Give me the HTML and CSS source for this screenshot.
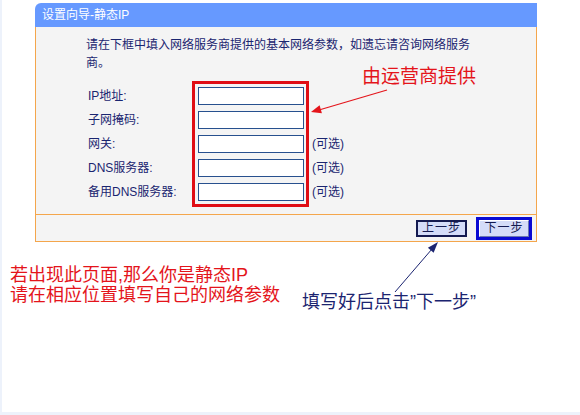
FILE: index.html
```html
<!DOCTYPE html>
<html lang="zh-CN">
<head>
<meta charset="utf-8">
<title>设置向导-静态IP</title>
<link rel="stylesheet" href="styles.css">
</head>
<body>
<div class="page">
  <div class="wizard">
    <div class="wizard-title">设置向导-静态IP</div>
    <div class="wizard-body">
      <p class="intro"><span class="intro-line">请在下框中填入网络服务商提供的基本网络参数，如遗忘请咨询网络服务</span><span class="intro-line">商。</span></p>
      <div class="form">
        <div class="labels">
          <span>IP地址:</span>
          <span>子网掩码:</span>
          <span>网关:</span>
          <span>DNS服务器:</span>
          <span>备用DNS服务器:</span>
        </div>
        <div class="field-box">
          <input class="field" type="text">
          <input class="field" type="text">
          <input class="field" type="text">
          <input class="field" type="text">
          <input class="field" type="text">
        </div>
        <div class="opts">
          <span></span>
          <span></span>
          <span>(可选)</span>
          <span>(可选)</span>
          <span>(可选)</span>
        </div>
      </div>
    </div>
    <div class="wizard-foot">
      <button class="btn" type="button">上一步</button>
      <span class="btn-focus"><button class="btn btn-next" type="button">下一步</button></span>
    </div>
  </div>
  <div class="notes">
    <div class="note-red">若出现此页面,那么你是静态IP<br>请在相应位置填写自己的网络参数</div>
    <div class="note-blue">填写好后点击”下一步”</div>
  </div>
  <div class="callout">由运营商提供</div>
  <svg class="arrows" width="580" height="415" viewBox="0 0 580 415">
    <line x1="387" y1="90" x2="319" y2="110" stroke="#e4141b" stroke-width="1.2"/>
    <polygon points="311,112 321.9,113.2 319.6,105.2" fill="#e4141b"/>
    <line x1="395" y1="292" x2="432" y2="249" stroke="#1b2470" stroke-width="1"/>
    <polygon points="438,242 433.6,252.8 427.9,247.8" fill="#1b2470"/>
  </svg>
</div>
</body>
</html>
```
FILE: styles.css
```css
html, body {
  margin: 0;
  padding: 0;
}
body {
  background: #edf2fb;
  width: 580px;
  height: 415px;
  overflow: hidden;
  font-family: "Liberation Sans", "Noto Sans CJK SC", sans-serif;
}
.page {
  position: relative;
  margin-left: 2px;
  width: 578px;
  height: 412px;
  background: #ffffff;
  overflow: hidden;
}
.wizard {
  margin: 3px 0 0 33px;
  width: 502px;
}
.wizard-title {
  height: 24px;
  line-height: 24px;
  padding-left: 7px;
  background: #6699ff;
  color: #ffffff;
  font-size: 12px;
  border-radius: 6px 0 0 0;
}
.wizard-body {
  background: #f4f4f4;
  border-left: 1px solid #f4a64c;
  border-right: 1px solid #f4a64c;
  padding: 9px 0 7px 50px;
}
.intro {
  margin: 0;
  font-size: 12px;
  line-height: 18px;
  color: #1a2570;
}
.intro-line {
  display: block;
  width: fit-content;
  white-space: nowrap;
}
.form {
  display: flex;
  align-items: flex-start;
  margin-top: 9px;
}
.labels, .opts {
  display: grid;
  grid-auto-rows: 18px;
  row-gap: 6px;
  padding-top: 6px;
  font-size: 12px;
  line-height: 18px;
  color: #1a2570;
}
.labels {
  width: 104px;
  padding-left: 2px;
}
.opts {
  margin-left: 3px;
}
.field-box {
  display: grid;
  grid-auto-rows: 18px;
  row-gap: 6px;
  border: 3px solid #e00d14;
  padding: 3px 2px 3px 3px;
}
.field {
  box-sizing: border-box;
  width: 106px;
  height: 18px;
  margin: 0;
  padding: 0;
  border: 1px solid #27508e;
  background: #ffffff;
}
.wizard-foot {
  box-sizing: border-box;
  height: 28px;
  background: #f4f4f4;
  border: 1px solid #f4a64c;
  display: flex;
  justify-content: flex-end;
  align-items: center;
  gap: 9px;
  padding-right: 4px;
}
.btn {
  box-sizing: border-box;
  width: 51px;
  height: 17px;
  margin: 0;
  padding: 0;
  border: 2px solid #141a50;
  background: #d4dcf8;
  color: #141a50;
  font-family: "Liberation Sans", "Noto Sans CJK SC", sans-serif;
  font-size: 12px;
  line-height: 13px;
  letter-spacing: 1px;
}
.btn-focus {
  display: flex;
  border: 3px solid #0a0ad2;
}
.btn-next {
  width: 50px;
  border: 1px solid #ffffff;
  border-right-color: #6a78b0;
  border-bottom-color: #6a78b0;
}
.notes {
  display: flex;
  align-items: flex-start;
  margin-top: 23px;
  padding-left: 8px;
}
.note-red {
  width: 292px;
  font-size: 18px;
  line-height: 20px;
  color: #e4141b;
}
.note-blue {
  margin-top: 27px;
  font-size: 18px;
  line-height: 20px;
  color: #1b2470;
}
.callout {
  position: absolute;
  left: 360px;
  top: 67px;
  font-size: 19px;
  line-height: 20px;
  color: #e4141b;
}
.arrows {
  position: absolute;
  left: -2px;
  top: 0;
  pointer-events: none;
}
```
